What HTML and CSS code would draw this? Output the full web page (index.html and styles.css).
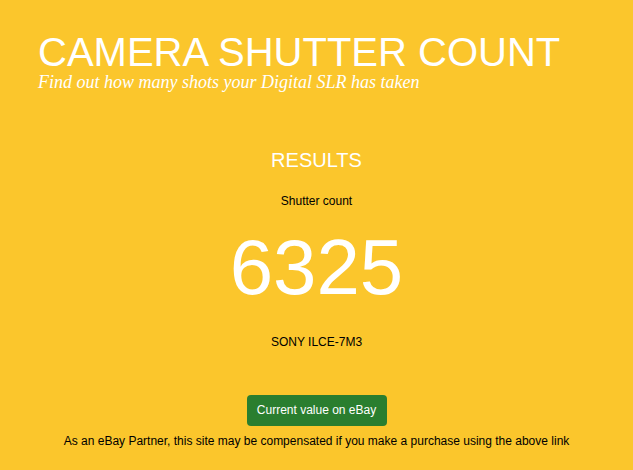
FILE: index.html
```html
<!DOCTYPE html>
<html lang="en">
<head>
    <meta charset="UTF-8">
    <meta name="viewport" content="width=device-width, initial-scale=1.0">
    <title>Camera Shutter Count</title>
    <link rel="stylesheet" href="styles.css">
</head>
<body>
    <div class="page">
        <div class="header">
            <h1 class="title">CAMERA SHUTTER COUNT</h1>
            <p class="tagline">Find out how many shots your Digital SLR has taken</p>
        </div>

        <div class="results">
            <h2 class="results_head">RESULTS</h2>
            <p class="label">Shutter count</p>
            <div class="count">6325</div>
            <p class="model">SONY ILCE-7M3</p>

            <a href="#" class="ebay_btn">Current value on eBay</a>
            <p class="disclaimer">As an eBay Partner, this site may be compensated if you make a purchase using the above link</p>
        </div>
    </div>
</body>
</html>
```

FILE: styles.css
```css
html, body{
  margin:0;
  padding:0;
  background:#fbc62c;
}
.page{
  font-family:"Liberation Sans", Arial, sans-serif;
  color:#000;
  min-height:470px;
}
.header{
  padding:32px 38px 0;
}
.header .title{
  margin:0;
  font-size:40px;
  font-weight:normal;
  color:#fff;
  line-height:40px;
}
.header .tagline{
  margin:0;
  font-family:"Liberation Serif", Georgia, serif;
  font-style:italic;
  font-size:18px;
  color:#fff;
  line-height:20px;
}
.results{
  display:flex;
  flex-direction:column;
  align-items:center;
  text-align:center;
  padding-top:56px;
}
.results_head{
  margin:0;
  font-size:20px;
  font-weight:normal;
  color:#fff;
  line-height:24px;
}
.label{
  margin:22px 0 0;
  font-size:12px;
  line-height:14px;
}
.count{
  margin-top:19px;
  font-size:78px;
  line-height:80px;
  color:#fff;
}
.model{
  margin:28px 0 0;
  font-size:12px;
  line-height:14px;
}
.ebay_btn{
  margin-top:46px;
  display:block;
  width:140px;
  height:31px;
  line-height:31px;
  background:#2a7e2f;
  color:#fff;
  font-size:12px;
  text-decoration:none;
  border-radius:4px;
}
.disclaimer{
  margin:8px 0 0;
  font-size:12px;
  line-height:14px;
}
```
